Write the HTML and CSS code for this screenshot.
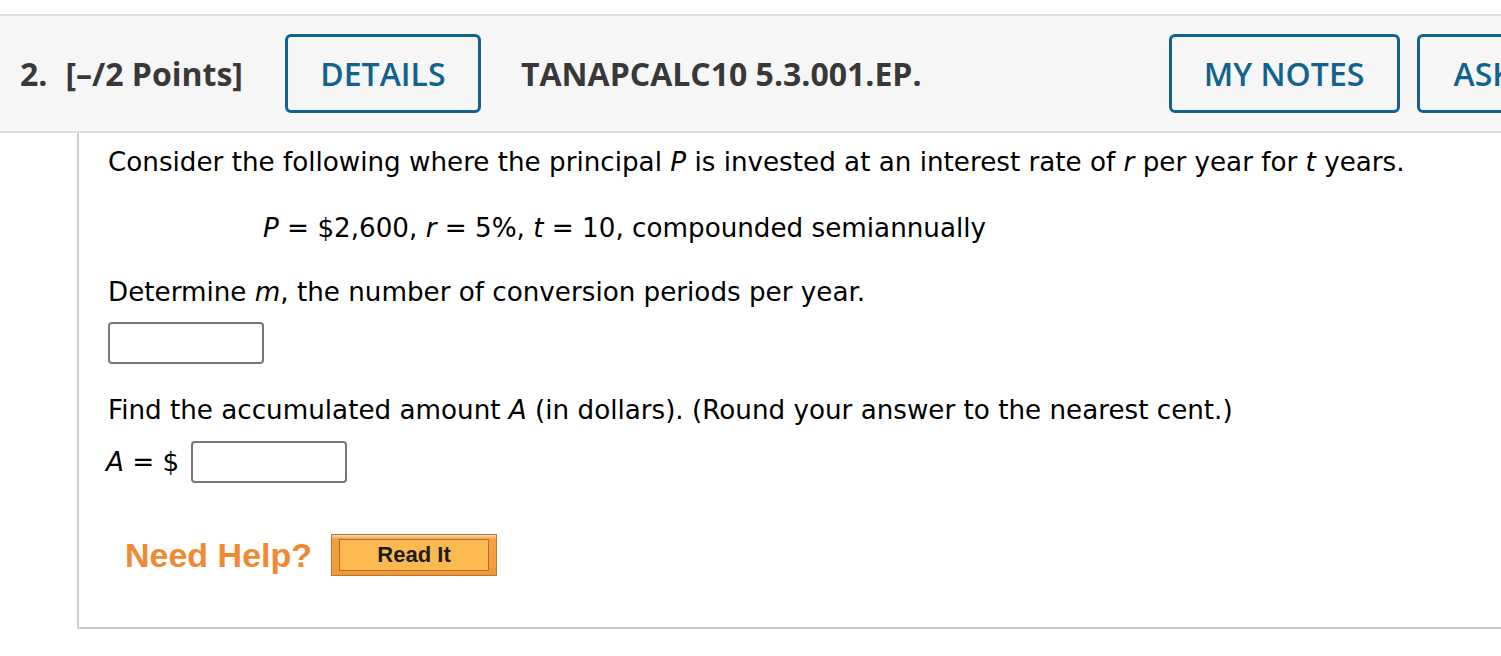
FILE: index.html
```html
<!DOCTYPE html>
<html>
<head>
<meta charset="utf-8">
<link rel="stylesheet" href="styles.css">
</head>
<body>
<div class="topgap"></div>
<div class="header">
  <span class="qnum">2.</span>
  <span class="points">[–/2 Points]</span>
  <span class="btn btn-details">DETAILS</span>
  <span class="code">TANAPCALC10 5.3.001.EP.</span>
  <span class="btn btn-notes">MY NOTES</span>
  <span class="btn btn-ask">ASK YOUR TEACHER</span>
</div>
<div class="question">
  <p class="line l1">Consider the following where the principal <i>P</i> is invested at an interest rate of <i>r</i> per year for <i>t</i> years.</p>
  <p class="line l2"><i>P</i> = $2,600, <i>r</i> = 5%, <i>t</i> = 10, compounded semiannually</p>
  <p class="line l3">Determine <i>m</i>, the number of conversion periods per year.</p>
  <div class="answer a1"><span class="box"></span></div>
  <p class="line l4">Find the accumulated amount <i>A</i> (in dollars). (Round your answer to the nearest cent.)</p>
  <div class="answer a2"><span class="label"><i>A</i> = $</span><span class="box"></span></div>
  <div class="help">
    <span class="need">Need Help?</span>
    <span class="readit"><span class="readit-inner">Read It</span></span>
  </div>
</div>
</body>
</html>
```

FILE: styles.css
```css
html, body {
  margin: 0;
  padding: 0;
  background: #ffffff;
}
body {
  width: 1501px;
  overflow: hidden;
}
.topgap {
  height: 14px;
}
.header {
  display: flex;
  align-items: center;
  height: 115px;
  background: #f6f6f6;
  border-top: 2px solid #dddddd;
  border-bottom: 2px solid #dddddd;
  font-family: "Open Sans", sans-serif;
  font-weight: 700;
  font-size: 32px;
  color: #383838;
  white-space: nowrap;
  overflow: hidden;
}
.qnum {
  margin-left: 20px;
  flex-shrink: 0;
}
.points {
  margin-left: 18px;
  flex-shrink: 0;
}
.btn {
  flex-shrink: 0;
  box-sizing: border-box;
  height: 79px;
  display: flex;
  align-items: center;
  justify-content: center;
  border: 3px solid #11628f;
  border-radius: 6px;
  color: #11628f;
  font-weight: 600;
}
.btn-details {
  margin-left: 42px;
  width: 196px;
}
.code {
  margin-left: 40px;
  flex-shrink: 0;
}
.btn-notes {
  margin-left: 247px;
  width: 231px;
}
.btn-ask {
  margin-left: 17px;
  justify-content: flex-start;
  padding-left: 34px;
  width: 360px;
}
.question {
  margin-left: 77px;
  height: 496px;
  box-sizing: border-box;
  border-left: 2px solid #cccccc;
  border-bottom: 2px solid #cccccc;
  padding: 14px 0 0 29px;
  font-family: "DejaVu Sans", Verdana, sans-serif;
  font-size: 26.2px;
  color: #000000;
}
.line {
  margin: 0;
  line-height: 30px;
  white-space: nowrap;
}
.l2 {
  margin-top: 36px;
  padding-left: 155px;
}
.l3 {
  margin-top: 34px;
}
.a1 {
  margin-top: 15px;
}
.l4 {
  margin-top: 31px;
}
.answer {
  display: flex;
  align-items: center;
  height: 42px;
}
.a2 {
  margin-top: 16px;
}
.label {
  margin-left: -2px;
  margin-right: 12px;
}
.box {
  display: block;
  box-sizing: border-box;
  width: 156px;
  height: 42px;
  border: 2px solid #777777;
  border-radius: 4px;
  background: #ffffff;
}
.help {
  display: flex;
  align-items: center;
  margin-top: 51px;
  margin-left: 17px;
  height: 42px;
}
.need {
  font-family: "Liberation Sans", Arial, sans-serif;
  font-weight: 700;
  font-size: 34px;
  color: #ef8a32;
}
.readit {
  margin-left: 19px;
  box-sizing: border-box;
  width: 166px;
  height: 42px;
  padding: 4px 7px;
  border: 1px solid #b9763a;
  background: linear-gradient(#fbd9a8 0px, #f5a13f 4px, #f39a37 100%);
  display: flex;
}
.readit-inner {
  flex: 1;
  display: flex;
  align-items: center;
  justify-content: center;
  border: 1px solid #ad7034;
  background: #fbb950;
  font-family: "Liberation Sans", Arial, sans-serif;
  font-weight: 700;
  font-size: 22px;
  color: #1d1d1d;
}
```
